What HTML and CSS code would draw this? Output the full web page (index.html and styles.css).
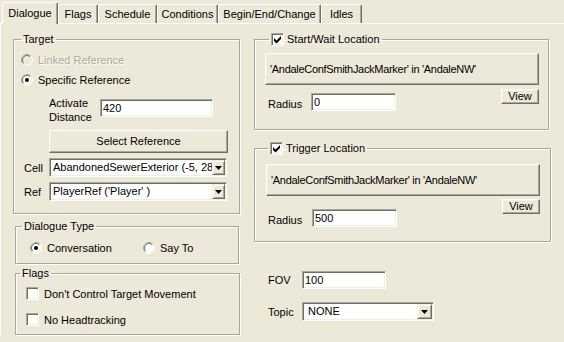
FILE: index.html
```html
<!DOCTYPE html>
<html>
<head>
<meta charset="utf-8">
<link rel="stylesheet" href="styles.css">
</head>
<body>
<div class="tabs">
  <div class="tab active t-dialogue">Dialogue</div>
  <div class="tab t-flags">Flags</div>
  <div class="tab t-schedule">Schedule</div>
  <div class="tab t-conditions">Conditions</div>
  <div class="tab t-bec">Begin/End/Change</div>
  <div class="tab t-idles">Idles</div>
</div>
<div class="panel">
  <div class="col">
    <fieldset class="group target">
      <legend class="lg-target">Target</legend>
      <div class="opt disabled">
        <svg class="rd" width="12" height="12" viewBox="0 0 12 12"><circle cx="6" cy="6" r="5" fill="#ECE9D8"/><path d="M2.1 9.9A5.5 5.5 0 0 1 9.9 2.1" stroke="#ACA899" fill="none"/><path d="M9.9 2.1A5.5 5.5 0 0 1 2.1 9.9" stroke="#fff" fill="none"/><path d="M2.8 9.2A4.5 4.5 0 0 1 9.2 2.8" stroke="#716F64" fill="none"/><path d="M9.2 2.8A4.5 4.5 0 0 1 2.8 9.2" stroke="#F1EFE2" fill="none"/></svg>
        <span>Linked Reference</span>
      </div>
      <div class="opt opt2">
        <svg class="rd" width="12" height="12" viewBox="0 0 12 12"><circle cx="6" cy="6" r="5" fill="#fff"/><path d="M2.1 9.9A5.5 5.5 0 0 1 9.9 2.1" stroke="#ACA899" fill="none"/><path d="M9.9 2.1A5.5 5.5 0 0 1 2.1 9.9" stroke="#fff" fill="none"/><path d="M2.8 9.2A4.5 4.5 0 0 1 9.2 2.8" stroke="#716F64" fill="none"/><path d="M9.2 2.8A4.5 4.5 0 0 1 2.8 9.2" stroke="#F1EFE2" fill="none"/><circle cx="6" cy="6" r="2" fill="#000"/></svg>
        <span>Specific Reference</span>
      </div>
      <div class="activate">
        <span class="lbl lbl-act">Activate<br>Distance</span>
        <div class="edit edit-act">420</div>
      </div>
      <div class="btn select">Select Reference</div>
      <div class="frow cellrow">
        <span class="lbl lbl-cell">Cell</span>
        <div class="combo combo-cell">
          <span class="combo-text">AbandonedSewerExterior (-5, 28)</span>
          <span class="drop"><svg width="7" height="4" viewBox="0 0 7 4"><polygon points="0,0 7,0 3.5,4" fill="#000"/></svg></span>
        </div>
      </div>
      <div class="frow refrow">
        <span class="lbl lbl-cell">Ref</span>
        <div class="combo combo-cell">
          <span class="combo-text">PlayerRef ('Player' )</span>
          <span class="drop"><svg width="7" height="4" viewBox="0 0 7 4"><polygon points="0,0 7,0 3.5,4" fill="#000"/></svg></span>
        </div>
      </div>
    </fieldset>

    <fieldset class="group dtype">
      <legend class="lg-dtype">Dialogue Type</legend>
      <div class="radios">
        <div class="opt opt-conv">
          <svg class="rd" width="12" height="12" viewBox="0 0 12 12"><circle cx="6" cy="6" r="5" fill="#fff"/><path d="M2.1 9.9A5.5 5.5 0 0 1 9.9 2.1" stroke="#ACA899" fill="none"/><path d="M9.9 2.1A5.5 5.5 0 0 1 2.1 9.9" stroke="#fff" fill="none"/><path d="M2.8 9.2A4.5 4.5 0 0 1 9.2 2.8" stroke="#716F64" fill="none"/><path d="M9.2 2.8A4.5 4.5 0 0 1 2.8 9.2" stroke="#F1EFE2" fill="none"/><circle cx="6" cy="6" r="2" fill="#000"/></svg>
          <span>Conversation</span>
        </div>
        <div class="opt">
          <svg class="rd" width="12" height="12" viewBox="0 0 12 12"><circle cx="6" cy="6" r="5" fill="#fff"/><path d="M2.1 9.9A5.5 5.5 0 0 1 9.9 2.1" stroke="#ACA899" fill="none"/><path d="M9.9 2.1A5.5 5.5 0 0 1 2.1 9.9" stroke="#fff" fill="none"/><path d="M2.8 9.2A4.5 4.5 0 0 1 9.2 2.8" stroke="#716F64" fill="none"/><path d="M9.2 2.8A4.5 4.5 0 0 1 2.8 9.2" stroke="#F1EFE2" fill="none"/></svg>
          <span>Say To</span>
        </div>
      </div>
    </fieldset>

    <fieldset class="group flags">
      <legend class="lg-flags">Flags</legend>
      <div class="cbrow"><span class="chk"></span><span>Don't Control Target Movement</span></div>
      <div class="cbrow cbrow2"><span class="chk"></span><span>No Headtracking</span></div>
    </fieldset>
  </div>

  <div class="col">
    <fieldset class="group loc startwait">
      <legend class="lg-loc lg-sw"><span class="chk"><svg width="11" height="11" viewBox="0 0 11 11"><path d="M2 4 L4.5 6.5 L9 2 L9 5 L4.5 9.5 L2 7 Z" fill="#000"/></svg></span><span class="lgtext">Start/Wait Location</span></legend>
      <div class="btn bigbtn">'AndaleConfSmithJackMarker' in 'AndaleNW'</div>
      <div class="locrow">
        <div class="radius rad-sw">
          <span class="lbl lbl-rad">Radius</span>
          <div class="edit edit-rad">0</div>
        </div>
        <div class="btn view view-sw">View</div>
      </div>
    </fieldset>

    <fieldset class="group loc trigger">
      <legend class="lg-loc lg-tr"><span class="chk"><svg width="11" height="11" viewBox="0 0 11 11"><path d="M2 4 L4.5 6.5 L9 2 L9 5 L4.5 9.5 L2 7 Z" fill="#000"/></svg></span><span class="lgtext">Trigger Location</span></legend>
      <div class="btn bigbtn">'AndaleConfSmithJackMarker' in 'AndaleNW'</div>
      <div class="locrow">
        <div class="radius rad-tr">
          <span class="lbl lbl-rad2">Radius</span>
          <div class="edit edit-rad">500</div>
        </div>
        <div class="btn view view-tr">View</div>
      </div>
    </fieldset>

    <div class="frow fov">
      <span class="lbl lbl-fov">FOV</span>
      <div class="edit edit-fov">100</div>
    </div>
    <div class="frow topic">
      <span class="lbl lbl-fov">Topic</span>
      <div class="combo combo-topic">
        <span class="combo-text topic-text">NONE</span>
        <span class="drop drop-topic"><svg width="7" height="4" viewBox="0 0 7 4"><polygon points="0,0 7,0 3.5,4" fill="#000"/></svg></span>
      </div>
    </div>
  </div>
</div>
</body>
</html>
```

FILE: styles.css
```css
html, body {
  margin: 0;
  padding: 0;
}
body {
  width: 564px;
  height: 342px;
  overflow: hidden;
  background: #ECE9D8;
  font-family: "Liberation Sans", Arial, sans-serif;
  font-size: 11px;
  color: #000;
}

/* ---------- tabs ---------- */
.tabs {
  display: flex;
  align-items: flex-end;
  height: 23px;
  padding-left: 2px;
  box-sizing: border-box;
}
.tab {
  box-sizing: border-box;
  height: 19px;
  line-height: 18px;
  text-align: center;
  white-space: nowrap;
  border-top: 1px solid #fff;
  border-left: 1px solid #fff;
  border-right: 1px solid #716F64;
  box-shadow: inset -1px 0 0 #ACA899;
  border-radius: 2px 2px 0 0;
  background: #ECE9D8;
}
.tab.active {
  height: 22px;
  line-height: 20px;
  margin-bottom: -1px;
  position: relative;
  z-index: 1;
}
.t-dialogue { width: 56px; }
.t-flags { width: 40px; }
.t-schedule { width: 59px; }
.t-conditions { width: 61px; }
.t-bec { width: 103px; }
.t-idles { width: 41px; }

/* ---------- panel ---------- */
.panel {
  border-top: 1px solid #fff;
  border-left: 1px solid #fff;
  display: grid;
  grid-template-columns: 227px 297px;
  column-gap: 14px;
  padding: 9px 0 0 12px;
  align-items: start;
}
.col {
  display: flex;
  flex-direction: column;
  align-items: flex-start;
}

/* ---------- group boxes ---------- */
.group {
  margin: 0;
  min-width: 0;
  box-sizing: border-box;
  border: 1px solid #ACA899;
  box-shadow: inset 1px 1px 0 #fff, 1px 1px 0 #fff;
}
.group legend {
  padding: 0 2px;
  line-height: 13px;
  height: 13px;
  white-space: nowrap;
}

.target {
  width: 227px;
  padding: 0 10px 12px 7px;
}
.dtype {
  width: 224px;
  margin: 6px 0 0 2px;
  padding: 6px 0 6px 14px;
}
.lg-dtype { margin-left: -8px; }
.flags {
  width: 225px;
  margin: 3px 0 0 2px;
  padding: 5px 0 6px 10px;
}
.lg-flags { margin-left: -6px; }

/* ---------- radios / checkboxes ---------- */
.opt {
  display: flex;
  align-items: center;
  height: 18px;
  white-space: nowrap;
}
.target .opt:first-of-type { margin-top: 5px; }
.opt2 { margin-top: 2px; }
.rd {
  flex: none;
  margin-right: 5px;
}
.disabled span {
  color: #ACA899;
  text-shadow: 1px 1px 0 #fff;
}
.radios {
  display: flex;
}
.opt-conv { width: 113px; }

.chk {
  flex: none;
  width: 13px;
  height: 13px;
  box-sizing: border-box;
  border: 1px solid;
  border-color: #ACA899 #fff #fff #ACA899;
  box-shadow: inset 1px 1px 0 #716F64, inset -1px -1px 0 #F1EFE2;
  background: #fff;
  display: inline-flex;
}
.cbrow {
  display: flex;
  align-items: center;
  height: 17px;
  white-space: nowrap;
}
.cbrow .chk { margin-right: 5px; }
.cbrow2 { margin-top: 9px; }

/* ---------- fields ---------- */
.lbl { flex: none; white-space: nowrap; }
.activate {
  display: flex;
  align-items: flex-start;
  margin: 7px 0 0 28px;
}
.lbl-act { width: 51px; line-height: 14px; }
.edit {
  box-sizing: border-box;
  height: 18px;
  line-height: 16px;
  padding-left: 2px;
  border: 1px solid;
  border-color: #ACA899 #fff #fff #ACA899;
  box-shadow: inset 1px 1px 0 #716F64, inset -1px -1px 0 #F1EFE2;
  background: #fff;
  white-space: nowrap;
}
.edit-act { width: 113px; margin-top: 3px; }

.btn {
  box-sizing: border-box;
  border: 1px solid;
  border-color: #fff #716F64 #716F64 #fff;
  box-shadow: inset -1px -1px 0 #ACA899, inset 1px 1px 0 #F1EFE2;
  background: #ECE9D8;
  white-space: nowrap;
}
.select {
  width: 179px;
  height: 23px;
  line-height: 21px;
  text-align: center;
  margin: 6px 0 0 28px;
}

.frow {
  display: flex;
  align-items: center;
}
.cellrow { margin-top: 5px; padding-left: 3px; }
.refrow { margin-top: 5px; padding-left: 3px; }
.lbl-cell { width: 25px; }

.combo {
  box-sizing: border-box;
  display: flex;
  height: 19px;
  padding: 1px;
  border: 1px solid;
  border-color: #ACA899 #fff #fff #ACA899;
  box-shadow: inset 1px 1px 0 #716F64, inset -1px -1px 0 #F1EFE2;
  background: #fff;
}
.combo-cell { width: 178px; }
.combo-text {
  flex: 1;
  min-width: 0;
  overflow: hidden;
  white-space: nowrap;
  line-height: 15px;
  padding-left: 2px;
}
.drop {
  flex: none;
  box-sizing: border-box;
  width: 13px;
  height: 15px;
  display: flex;
  align-items: center;
  justify-content: center;
  border: 1px solid;
  border-color: #F1EFE2 #716F64 #716F64 #F1EFE2;
  box-shadow: inset 1px 1px 0 #fff, inset -1px -1px 0 #ACA899;
  background: #ECE9D8;
}
.drop-topic { width: 15px; }

/* ---------- right column ---------- */
.lg-loc {
  display: flex;
  align-items: center;
}
.lg-sw { margin-left: 4px; }
.lg-tr { margin-left: 2px; }
.lgtext { margin-left: 3px; }

.startwait {
  width: 295px;
  padding: 7px 9px 16px 10px;
}
.trigger {
  width: 297px;
  margin-top: 12px;
  padding: 9px 10px 12px 11px;
}
.bigbtn {
  width: 274px;
  height: 32px;
  line-height: 30px;
  padding-left: 4px;
  letter-spacing: -0.3px;
}
.locrow {
  display: flex;
  justify-content: space-between;
  align-items: flex-start;
}
.radius {
  display: flex;
  align-items: flex-start;
}
.rad-sw { margin: 8px 0 0 3px; }
.rad-tr { margin: 13px 0 0 2px; }
.lbl-rad { width: 43px; line-height: 18px; margin-top: 2px; }
.lbl-rad2 { width: 44px; line-height: 18px; margin-top: 2px; }
.edit-rad { width: 85px; }
.view {
  width: 38px;
  height: 15px;
  line-height: 13px;
  text-align: center;
}
.view-sw { margin-top: 4px; }
.view-tr { margin-top: 3px; }

.fov { margin-top: 29px; padding-left: 14px; }
.lbl-fov { width: 34px; }
.edit-fov { width: 84px; }
.topic { margin-top: 13px; padding-left: 14px; }
.combo-topic { width: 132px; }
.topic-text { padding-left: 4px; }
```
